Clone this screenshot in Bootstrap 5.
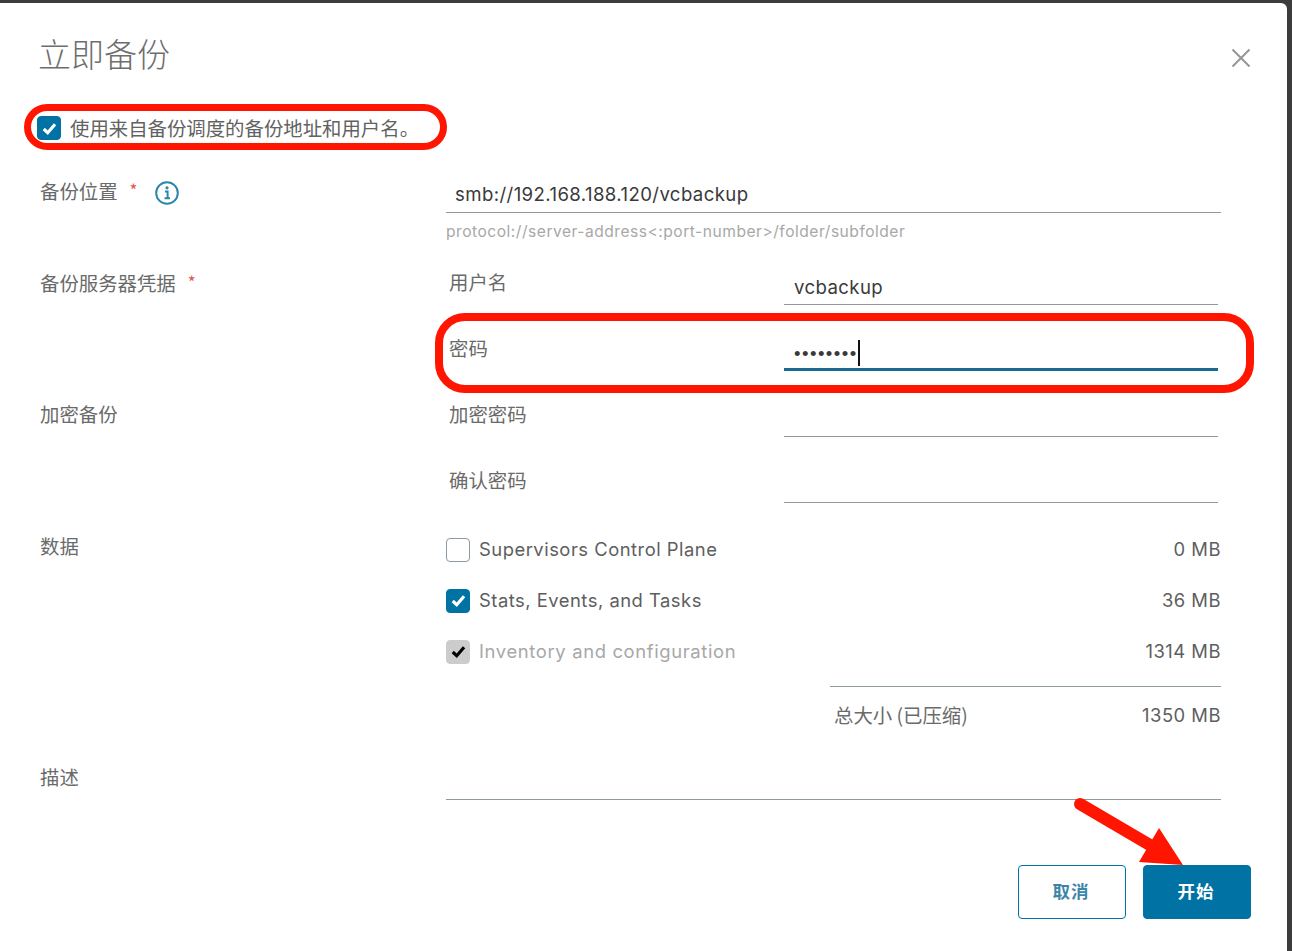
<!DOCTYPE html>
<html lang="zh-CN">
<head>
<meta charset="utf-8">
<title>立即备份</title>
<link href="https://cdn.jsdelivr.net/npm/bootstrap@5.3.0/dist/css/bootstrap.min.css" rel="stylesheet">
<style>
html,body{height:951px;overflow:hidden}
body{background:#3c3c3c;font-family:Inter,"Noto Sans CJK SC",sans-serif;color:#5e5e5e;font-size:18.4px;letter-spacing:.5px}
.cjk{font-family:"Noto Sans CJK SC",sans-serif;font-size:19.4px;color:#6a6a6a;line-height:38px;letter-spacing:0}
.lead-col.cjk,.sub-lab.cjk{line-height:36px}
.dlg{width:1287px;height:948px;margin-top:3px;background:#fff;border-top-right-radius:6px;position:relative;padding-left:40px}
.dlg-head{height:102px;padding-top:26px}
.dlg-title{font-family:"Noto Sans CJK SC",sans-serif;font-weight:300;font-size:33px;line-height:48px;color:#6e6e6e;margin:0 0 0 -2px;letter-spacing:0}
.dlg-close{width:22px;height:22px;right:35px;top:40px;position:absolute;padding:0;border:0;background:none}
.form-check-input.tick{width:24px;height:24px;margin:0;flex:none;border-radius:4px;border:1.5px solid #8c9aa3;background-color:#fff;opacity:1;float:none}
.form-check-input.tick:checked{background-color:#0072a3;border-color:#0072a3;background-size:21px;background-image:url("data:image/svg+xml,%3Csvg xmlns='http://www.w3.org/2000/svg' viewBox='0 0 20 20'%3E%3Cpath d='M4.5 10.5l3.8 3.5 7-8' fill='none' stroke='%23fff' stroke-width='3'/%3E%3C/svg%3E")}
.form-check-input.tick:disabled{background-color:#ccc;border-color:#ccc;background-image:url("data:image/svg+xml,%3Csvg xmlns='http://www.w3.org/2000/svg' viewBox='0 0 20 20'%3E%3Cpath d='M4.5 10.5l3.8 3.5 7-8' fill='none' stroke='%23000' stroke-width='3'/%3E%3C/svg%3E")}
.top-check{height:46px;margin-left:-3px;gap:9px}
.top-check .cjk{color:#626262}
.lead-col{width:406px;flex:none}
.main-col{width:775px;flex:none}
.ln{display:block;height:41px;border:0;border-bottom:1px solid #8f9a9f;border-radius:0;padding:9px 0 5px 9px;font-size:18.6px;letter-spacing:.4px;line-height:26px;color:#3a3a3a;background:transparent;box-shadow:none}
.req{color:#e0584f;font-size:17px;margin-left:12px;vertical-align:2px}
.info-ic{margin-left:12px;vertical-align:-7px}
.r-loc{height:92px;margin-top:21px}
.hint{font-size:15.6px;color:#a8a8a8;line-height:20px;margin-top:9px}
.sub-row{height:66px;padding-right:3px}
.sub-lab{width:338px;flex:none;padding-left:3px}
.sub-row .ln{width:434px;flex:none;padding-left:10px;padding-top:10px;padding-bottom:4px}
.caret-wrap{position:relative;width:434px;flex:none}
.caret-wrap .ln.pw{width:100%;letter-spacing:1.45px;font-family:"Liberation Sans",sans-serif;padding-top:13px;border-bottom:3px solid #1a6a8f}
.text-caret{position:absolute;left:74px;top:10px;width:2px;height:26px;background:#111}
.data-col{margin-top:-4px}
.data-row{height:51px;gap:9px}
.dim{color:#a8a8a8;letter-spacing:.65px}
.tot{margin-top:9px;margin-left:384px;height:73px;border-top:1px solid #8f9a9f;padding:16px 0 0 4px;line-height:24px}
.tot .cjk{font-size:19.4px;line-height:24px;letter-spacing:0}
.desc-lab{padding-top:0}
.dlg-foot{position:absolute;right:36px;bottom:32px;gap:17px}
.act{width:108px;height:54px;padding:0 2px 2px 0;border-radius:4px;font-family:"Noto Sans CJK SC",sans-serif;font-weight:700;font-size:17.5px;letter-spacing:1px}
.act-ghost{background:#fff;border:1.5px solid #0072a3;color:#3d86a8}
.act-main{background:#0072a3;border:1.5px solid #0072a3;color:#fff}
.mark-ring{position:absolute;border:7px solid #ff1500;pointer-events:none}
.ring-a{left:24px;top:101px;width:423px;height:46px;border-radius:23px}
.ring-b{left:435px;top:310px;width:819px;height:80px;border-width:8px;border-radius:30px}
.mark-arrow{position:absolute;left:1060px;top:785px;width:140px;height:90px;pointer-events:none}
</style>
</head>
<body>
<div class="dlg">
  <div class="dlg-head">
    <h3 class="dlg-title">立即备份</h3>
    <button class="dlg-close" type="button" aria-label="关闭">
      <svg width="22" height="22" viewBox="0 0 22 22"><path d="M2.500 2.500l17 17M19.500 2.500l-17 17" stroke="#969696" stroke-width="2" fill="none"/></svg>
    </button>
  </div>

  <label class="top-check d-flex align-items-center">
    <input class="form-check-input tick" type="checkbox" checked>
    <span class="cjk">使用来自备份调度的备份地址和用户名。</span>
  </label>

  <div class="r-loc d-flex">
    <div class="lead-col cjk">备份位置<span class="req">*</span>
      <svg class="info-ic" width="26" height="26" viewBox="0 0 26 26"><circle cx="13" cy="13" r="10.800" fill="none" stroke="#2a86ad" stroke-width="2"/><path d="M11 11.500h2.600v6.500M10.500 18.300h5.500" fill="none" stroke="#2a86ad" stroke-width="2"/><circle cx="13" cy="7.800" r="1.600" fill="#2a86ad"/></svg>
    </div>
    <div class="main-col">
      <input class="form-control ln" type="text" value="smb://192.168.188.120/vcbackup">
      <div class="hint">protocol://server-address&lt;:port-number&gt;/folder/subfolder</div>
    </div>
  </div>

  <div class="d-flex">
    <div class="lead-col cjk">备份服务器凭据<span class="req">*</span></div>
    <div class="main-col">
      <div class="sub-row d-flex"><div class="sub-lab cjk">用户名</div><input class="form-control ln" type="text" value="vcbackup"></div>
      <div class="sub-row d-flex"><div class="sub-lab cjk">密码</div>
        <div class="caret-wrap"><input class="form-control ln pw" type="password" value="12345678"><span class="text-caret"></span></div>
      </div>
    </div>
  </div>

  <div class="d-flex">
    <div class="lead-col cjk">加密备份</div>
    <div class="main-col">
      <div class="sub-row d-flex"><div class="sub-lab cjk">加密密码</div><input class="form-control ln" type="password"></div>
      <div class="sub-row d-flex"><div class="sub-lab cjk">确认密码</div><input class="form-control ln" type="password"></div>
    </div>
  </div>

  <div class="d-flex">
    <div class="lead-col cjk">数据</div>
    <div class="main-col data-col">
      <div class="data-row d-flex align-items-center"><input class="form-check-input tick" type="checkbox"><span>Supervisors Control Plane</span><span class="ms-auto">0 MB</span></div>
      <div class="data-row d-flex align-items-center"><input class="form-check-input tick" type="checkbox" checked><span>Stats, Events, and Tasks</span><span class="ms-auto">36 MB</span></div>
      <div class="data-row d-flex align-items-center"><input class="form-check-input tick" type="checkbox" checked disabled><span class="dim">Inventory and configuration</span><span class="ms-auto">1314 MB</span></div>
      <div class="tot d-flex"><span class="cjk">总大小 (已压缩)</span><span class="ms-auto">1350 MB</span></div>
    </div>
  </div>

  <div class="d-flex">
    <div class="lead-col cjk desc-lab">描述</div>
    <div class="main-col"><input class="form-control ln" type="text"></div>
  </div>

  <div class="dlg-foot d-flex">
    <button class="btn act act-ghost" type="button">取消</button>
    <button class="btn act act-main" type="button">开始</button>
  </div>

  <div class="mark-ring ring-a"></div>
  <div class="mark-ring ring-b"></div>
  <svg class="mark-arrow" viewBox="0 0 140 90"><path d="M20 16L95 60" stroke="#ff1500" stroke-width="12" stroke-linecap="round" fill="none"/><path d="M123 77L99 40 79 74z" fill="#ff1500"/></svg>
</div>
<script src="https://cdn.jsdelivr.net/npm/bootstrap@5.3.0/dist/js/bootstrap.bundle.min.js"></script>
</body>
</html>
